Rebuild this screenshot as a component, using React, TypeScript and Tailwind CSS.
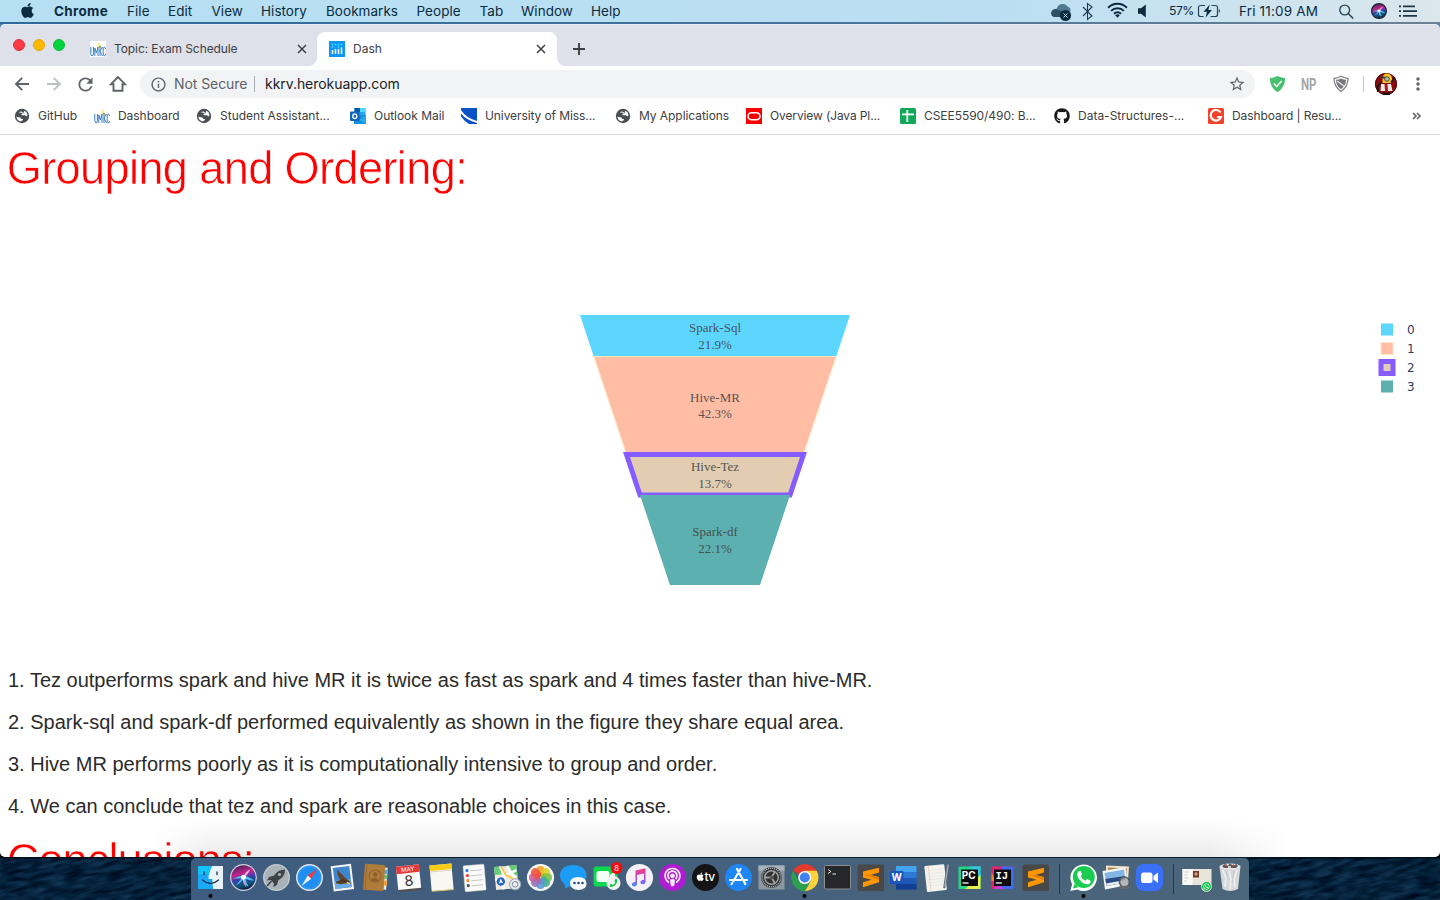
import React from 'react';
import { FaApple, FaGithub, FaPhoneAlt, FaPodcast, FaWhatsapp } from 'react-icons/fa';
import { MdRefresh, MdInfoOutline, MdStarBorder, MdMoreVert } from 'react-icons/md';

const menuItems = [
  { label: 'File', cls: 'w-[41px]' },
  { label: 'Edit', cls: 'w-[43.5px]' },
  { label: 'View', cls: 'w-[49.5px]' },
  { label: 'History', cls: 'w-[65px]' },
  { label: 'Bookmarks', cls: 'w-[90.5px]' },
  { label: 'People', cls: 'w-[63px]' },
  { label: 'Tab', cls: 'w-[41.5px]' },
  { label: 'Window', cls: 'w-[70px]' },
  { label: 'Help', cls: 'w-[40px]' },
];

function SiriOrb({ cx, cy, r, id }: { cx: number; cy: number; r: number; id: string }) {
  return (
    <g>
      <defs>
        <linearGradient id={id} x1="0.3" y1="0" x2="0.6" y2="1">
          <stop offset="0" stopColor="#4b2258" />
          <stop offset="0.35" stopColor="#c2268c" />
          <stop offset="0.55" stopColor="#3b3fae" />
          <stop offset="0.8" stopColor="#0b5378" />
          <stop offset="1" stopColor="#12143c" />
        </linearGradient>
      </defs>
      <circle cx={cx} cy={cy} r={r} fill={`url(#${id})`} />
      <g transform={`translate(${cx} ${cy}) scale(${r / 12})`}>
        <path d="M-10.500 1Q-4-1.500 0-2 4-1.500 10.500 3 6 3 2 1.500 3 6 5 9 0 7-.5 2-3 6-8 8-4 4-2 1-6 1-10.500 1z" fill="#4fd0ee" fillOpacity=".9" />
        <path d="M0-1Q2-6 7-8 4-3 1 0z" fill="#f7b3dc" />
        <path d="M0 0Q1 6 3 10 0 7-1 1z" fill="#f4a4d4" />
        <circle r="2.4" cy="-.3" fill="#fff" />
      </g>
    </g>
  );
}

function MenuBar() {
  return (
    <div className="flex h-[22px] shrink-0 items-center bg-linear-to-r from-[#b6dff3] via-[#bbdff2] via-70% to-[#dae7ec] text-[13.5px] leading-[22px] whitespace-nowrap text-[#0b2c40]">
      <div className="flex w-[54px] shrink-0 pl-[19px]">
        <FaApple size={17} className="relative -top-px" />
      </div>
      <div className="w-[73px] shrink-0 font-bold tracking-[0.3px]">Chrome</div>
      {menuItems.map((m) => (
        <div key={m.label} className={`${m.cls} shrink-0 tracking-[0.04px]`}>
          {m.label}
        </div>
      ))}
      <div className="flex-1" />
      <svg className="shrink-0" width="119" height="22" viewBox="0 0 119 22">
        <path d="M5 12a4.400 4.400 0 0 1 2-3.800 6 6 0 0 1 10.600-1.800 4.600 4.600 0 0 1 3 4.600l-6 5z" fill="#50798e" />
        <path d="M1 13.500a4.500 4.500 0 0 1 5-4.500l10 4-2 4H4a4 4 0 0 1-3-3.500z" fill="#2c4f63" />
        <circle cx="15.500" cy="15.500" r="5.600" fill="#0d2b3f" />
        <path d="M13.500 13.500l4 4M17.500 13.500l-4 4" stroke="#bfe0ef" strokeWidth="1" />
        <path d="M33 7l9 9-4.500 3.500V3.500l4.500 3.500-9 9" fill="none" stroke="#173b50" strokeWidth="1.100" />
        <g fill="none" stroke="#0d2b3f" strokeWidth="2">
          <path d="M58.100 7.800a13.200 13.200 0 0 1 18.800 0" />
          <path d="M61.100 10.900a9 9 0 0 1 12.800 0" />
          <path d="M64 13.800a5 5 0 0 1 7 0" />
        </g>
        <path d="M65.200 15.300a3.300 3.300 0 0 1 4.600 0L67.500 17.700z" fill="#0d2b3f" />
        <path d="M88 8.300h3l4.800-3.800v13l-4.800-3.800h-3z" fill="#0d2b3f" />
      </svg>
      <div className="w-[28px] shrink-0 text-[12.3px] tracking-[-0.6px]">57%</div>
      <svg className="shrink-0" width="42" height="22" viewBox="0 0 42 22">
        <path d="M8 5.500H3.500a2 2 0 0 0-2 2v7a2 2 0 0 0 2 2H6.500M14.500 5.500h4a2 2 0 0 1 2 2v7a2 2 0 0 1-2 2H13.500" fill="none" stroke="#1f4357" strokeWidth="1.200" />
        <path d="M12.800 4.500l-6.300 7.300h3.600l-1.600 5.900 6.400-7.600h-3.600z" fill="#0d2b3f" />
        <path d="M21.800 9v4c1.500-.6 1.500-3.400 0-4z" fill="#1f4357" />
      </svg>
      <div className="w-[98px] shrink-0 tracking-[0.17px]">Fri 11:09 AM</div>
      <svg className="shrink-0" width="103" height="22" viewBox="0 0 103 22">
        <circle cx="7.700" cy="10" r="4.900" fill="none" stroke="#2a4555" strokeWidth="1.400" />
        <path d="M11.200 13.500l5 5" stroke="#2a4555" strokeWidth="1.600" />
        <g>
          <SiriOrb cx={42} cy={11} r={7.2} id="siriMenu" />
          <circle cx="42" cy="11" r="7.400" fill="none" stroke="#14202e" strokeWidth="1.200" />
        </g>
        <path
          d="M62 5.500h2v1.800h-2zM62 10.200h2v1.800h-2zM62 14.900h2v1.800h-2zM66 5.500h12v1.800H66zM66 10.200h14v1.800H66zM66 14.900h14v1.800H66z"
          fill="#1c3645"
        />
      </svg>
    </div>
  );
}

function UmkcIcon() {
  return (
    <svg width="16" height="16" viewBox="0 0 16 16" className="shrink-0">
      <rect width="16" height="16" fill="#fff" />
      <path d="M7 .500l5.500 7-5-1.500 1.500-1z" fill="#f5cf1d" />
      <path d="M.8 6v6.500q0 2.300 1.300 2.300t1.300-2.300V6M4.800 15V7l1.700 5L8 6v9M10 5v10M12.500 6L10 10l2.500 5M15.600 8q-.4-2-1.300-2-1.200 0-1.200 4.500t1.200 4.500q1 0 1.300-2" fill="none" stroke="#3c7cc6" strokeWidth="1" />
    </svg>
  );
}

function CloseIcon() {
  return (
    <svg width="14" height="14" viewBox="0 0 14 14">
      <path d="M3 3l8 8M11 3l-8 8" stroke="#3c4043" strokeWidth="1.500" />
    </svg>
  );
}

function TabStrip() {
  return (
    <div className="flex h-[42px] shrink-0 items-end rounded-t-[5px] border-t border-[#eceef3] bg-[#dee1e9] text-[12px] text-[#3c4043]">
      <div className="flex h-full w-[90px] shrink-0 items-center gap-[8px] pb-[1px] pl-[13px]">
        <div className="size-[12px] rounded-full border border-[#e0303c] bg-[#fc3b47]" />
        <div className="size-[12px] rounded-full border border-[#e5a50a] bg-[#fdb900]" />
        <div className="size-[12px] rounded-full border border-[#0fb93a] bg-[#00d43c]" />
      </div>
      <div className="flex h-[34px] w-[227px] shrink-0 items-center">
        <UmkcIcon />
        <div className="ml-2 flex-1 tracking-[-0.09px]">Topic: Exam Schedule</div>
        <div className="mr-[8px]">
          <CloseIcon />
        </div>
      </div>
      <div className="relative flex h-[34px] w-[240px] shrink-0 items-center rounded-t-[8px] bg-white pl-[12px]">
        <div className="absolute bottom-0 -left-2 size-2 bg-[radial-gradient(circle_at_0_0,#dee1e9_7.5px,#fff_8px)]" />
        <div className="absolute -right-2 bottom-0 size-2 bg-[radial-gradient(circle_at_100%_0,#dee1e9_7.5px,#fff_8px)]" />
        <svg width="16" height="16" viewBox="0 0 16 16">
          <rect width="16" height="16" fill="#0d96fb" />
          <path d="M3.500 9v4M6.500 8v5M9.500 8v5M12.500 6.500V13" stroke="#fff" strokeWidth="1.500" />
          <path d="M2.800 6h1.400M2.800 3.500h1.400M5.800 3.500h1.400M8.800 3.500h1.400M8.800 6h1.400M11.800 3.500h1.400" stroke="#4fe3f6" strokeWidth="1.300" />
        </svg>
        <div className="ml-2 flex-1">Dash</div>
        <div className="mr-[9px]">
          <CloseIcon />
        </div>
      </div>
      <div className="flex h-[34px] items-center pl-[13px]">
        <svg width="18" height="18" viewBox="0 0 18 18">
          <path d="M9 3v12M3 9h12" stroke="#3c4043" strokeWidth="1.900" />
        </svg>
      </div>
    </div>
  );
}

function Toolbar() {
  return (
    <div className="flex h-[36px] shrink-0 items-center bg-white text-[#5f6368]">
      <div className="flex w-[140px] shrink-0 items-center gap-[12px] pl-[12px]">
        <svg width="20" height="20" viewBox="0 0 20 20">
          <path d="M17 10H4.500M10.200 3.800L4 10l6.200 6.200" fill="none" stroke="#5f6368" strokeWidth="1.900" />
        </svg>
        <svg width="20" height="20" viewBox="0 0 20 20">
          <path d="M3 10h12.500M9.800 3.800L16 10l-6.200 6.200" fill="none" stroke="#bdc1c6" strokeWidth="1.900" />
        </svg>
        <MdRefresh size={21} className="-mr-px -ml-px" />
        <svg width="20" height="20" viewBox="0 0 20 20" className="ml-px">
          <path d="M10 3L3 10.200h2.500v6.600h9v-6.600H17z" fill="none" stroke="#5f6368" strokeWidth="1.900" />
        </svg>
      </div>
      <div className="flex h-[28px] w-[1115px] shrink-0 items-center rounded-full bg-[#f1f3f4] pl-[10px] text-[14px]">
        <MdInfoOutline size={17} />
        <div className="relative -top-px ml-[7px] w-[74px] tracking-[-0.07px] whitespace-nowrap">Not Secure</div>
        <div className="ml-[6px] h-[16px] w-px bg-[#a9acb0]" />
        <div className="relative -top-px ml-[10px] flex-1 tracking-[-0.05px] text-[#202124]">kkrv.herokuapp.com</div>
        <MdStarBorder size={18} className="mr-[9px]" />
      </div>
      <svg width="185" height="36" viewBox="0 0 185 36" className="shrink-0">
        <path d="M22.500 10q4 2 7.700 2 0 9.500-7.700 14.200Q14.800 21.500 14.800 12q4 0 7.700-2z" fill="#45c16f" />
        <path d="M18.700 17.500l3 3 5-5.500" fill="none" stroke="#fff" strokeWidth="1.500" />
        <text x="46" y="24" textLength="15.500" lengthAdjust="spacingAndGlyphs" className="font-['Roboto',sans-serif] text-[16px] font-bold" fill="#a5a5a5">
          NP
        </text>
        <path d="M86 10.300q3.500 2 7 2 0 8.500-7 13.200-7-4.700-7-13.200 3.500 0 7-2z" fill="none" stroke="#77797c" strokeWidth="1.200" />
        <path d="M86 12.500q2.500 1.300 5 1.300 0 6-5 9.500-5-3.500-5-9.500 2.500 0 5-1.300z" fill="#77797c" />
        <path d="M82 15l7.500 5.500" stroke="#e8e8e8" strokeWidth="1.300" />
        <path d="M108.500 10v16" stroke="#c3c5c8" />
        <circle cx="131" cy="18" r="11" fill="#8c0b10" />
        <circle cx="131" cy="18" r="10.500" fill="none" stroke="#4c0a0c" />
        <path d="M127.500 17v-5q.5-4.500 4.500-4.500t5 4.500v5z" fill="#f5c526" />
        <path d="M125.500 11l8 1.500" stroke="#3a3a36" strokeWidth="1.800" />
        <circle cx="132" cy="13" r="2.300" fill="#b9b6ac" stroke="#55524a" />
        <path d="M126 18h10l1.500 7h-12z" fill="#f4eee8" />
        <path d="M129.500 18h3l.5 7h-3z" fill="#b3161d" />
        <path d="M126 16.500l-3.500 4.500.5 5M136 16.500l4-5M129 26v2h5v-2" fill="none" stroke="#1b1412" strokeWidth="2" />
      </svg>
    </div>
  );
}

function GlobeIcon() {
  return (
    <svg width="16" height="16" viewBox="0 0 16 16" className="shrink-0">
      <circle cx="8" cy="8" r="7.200" fill="#4a4e55" />
      <path d="M2.400 8.300Q3.300 9.500 5 9.300q1.800 0 2 1.400.8.500 2 .2l-.3 1.400-2 1.300Q2.600 12.500 2.400 8.300zM10.500 2.700q2.800 1.300 3.100 4.600l-1.300 1.200-1.600-1.500q-1.800.6-3.200 0L7.600 5.800l1.800-.3.300-1.200z" fill="#fff" />
      <path d="M5.500 4.300L8 4l.5 1.500" fill="none" stroke="#fff" />
    </svg>
  );
}

function OutlookIcon() {
  return (
    <svg width="16" height="16" viewBox="0 0 16 16" className="shrink-0">
      <rect x="4.500" width="11" height="8" fill="#28a8ea" />
      <rect x="10" y="0" width="5.500" height="4" fill="#50d9ff" />
      <rect x="4.500" y="0" width="5.500" height="4" fill="#0358a7" />
      <path d="M3 7h13v9H4z" fill="#1490df" />
      <path d="M16 7v9L9 12z" fill="#28a8ea" />
      <rect y="3.500" width="9.500" height="9.500" rx="1" fill="#0f65bb" />
      <ellipse cx="4.800" cy="8.200" rx="2" ry="2.300" fill="none" stroke="#fff" strokeWidth="1.400" />
    </svg>
  );
}

function StripeIcon() {
  return (
    <svg width="16" height="16" viewBox="0 0 16 16" className="shrink-0">
      <rect width="16" height="16" fill="#0a53c6" />
      <path d="M0 2q5 8 16 11v2Q5 12 0 5.500z" fill="#fff" />
      <path d="M0 8.500q4 5.500 8 7.500H0z" fill="#fff" />
    </svg>
  );
}

function OracleIcon() {
  return (
    <svg width="16" height="16" viewBox="0 0 16 16" className="shrink-0">
      <rect width="16" height="16" fill="#f80000" />
      <rect x="2" y="4.800" width="12" height="7" rx="3.500" fill="none" stroke="#fff" strokeWidth="1.600" />
    </svg>
  );
}

function SheetIcon() {
  return (
    <svg width="16" height="16" viewBox="0 0 16 16" className="shrink-0">
      <rect width="16" height="16" rx="1.500" fill="#0fa958" />
      <path d="M7.300 2v12M2 6.300h12" stroke="#fff" strokeWidth="1.800" />
    </svg>
  );
}

function GrammarIcon() {
  return (
    <svg width="16" height="16" viewBox="0 0 16 16" className="shrink-0">
      <rect width="16" height="16" rx="1.500" fill="#f0432a" />
      <path d="M12.500 4.500A5.300 5.300 0 1 0 13 9H9" fill="none" stroke="#fff" strokeWidth="2.200" />
    </svg>
  );
}

const bookmarks = [
  { label: 'GitHub', icon: <GlobeIcon />, cls: 'w-[80px]' },
  { label: 'Dashboard', icon: <UmkcIcon />, cls: 'w-[102px] tracking-[-0.05px]' },
  { label: 'Student Assistant...', icon: <GlobeIcon />, cls: 'w-[154px]' },
  { label: 'Outlook Mail', icon: <OutlookIcon />, cls: 'w-[111px] tracking-[-0.04px]' },
  { label: 'University of Miss...', icon: <StripeIcon />, cls: 'w-[154px] tracking-[-0.09px]' },
  { label: 'My Applications', icon: <GlobeIcon />, cls: 'w-[131px] tracking-[-0.06px]' },
  { label: 'Overview (Java Pl...', icon: <OracleIcon />, cls: 'w-[154px] tracking-[-0.12px]' },
  { label: 'CSEE5590/490: B...', icon: <SheetIcon />, cls: 'w-[154px] tracking-[-0.05px]' },
  { label: 'Data-Structures-...', icon: <FaGithub size={16} className="shrink-0 text-[#191717]" />, cls: 'w-[154px]' },
  { label: 'Dashboard | Resu...', icon: <GrammarIcon />, cls: 'w-[154px] tracking-[-0.08px]' },
];

function BookmarksBar() {
  return (
    <div className="flex h-[33px] shrink-0 items-center border-b border-[#d5d7da] bg-white pb-[4px] pl-[14px] text-[12px] text-[#3c4043]">
      {bookmarks.map((b, i) => (
        <div key={i} className={`${b.cls} flex shrink-0 items-center gap-2 whitespace-nowrap`}>
          {b.icon}
          <span>{b.label}</span>
        </div>
      ))}
      <svg width="12" height="12" viewBox="0 0 12 12" className="ml-[49px]">
        <path d="M2 3l3 3-3 3M6 3l3 3-3 3" fill="none" stroke="#5f6368" strokeWidth="1.600" />
      </svg>
    </div>
  );
}

const segments = [
  { name: 'Spark-Sql', pct: '21.9%', y: 332 },
  { name: 'Hive-MR', pct: '42.3%', y: 401.5 },
  { name: 'Hive-Tez', pct: '13.7%', y: 471 },
  { name: 'Spark-df', pct: '22.1%', y: 536 },
];

function FunnelChart() {
  return (
    <svg width="1440" height="450" viewBox="0 200 1440 450" className="block">
      <path d="M580 315H850L836.300 356.200H593.700z" fill="#5cd6ff" />
      <path d="M593.800 356.500H836.200L803.500 454.500H626.500z" fill="#ffbda6" stroke="#ffe7c4" />
      <path d="M626.500 454.500H803.500L790 495H640z" fill="#e2cdb2" stroke="#855cff" strokeWidth="5" />
      <path d="M640 495H790L760 585H670z" fill="#5cb0af" />
      <g className="font-['Liberation_Serif',serif] text-[13px]" fill="#444" fillOpacity="0.9" textAnchor="middle">
        {segments.map((s) => (
          <g key={s.name}>
            <text x="715" y={s.y}>
              {s.name}
            </text>
            <text x="715" y={s.y + 16.7}>
              {s.pct}
            </text>
          </g>
        ))}
      </g>
      <rect x="1381" y="323.500" width="12" height="12" fill="#5cd6ff" />
      <rect x="1381" y="342.500" width="12" height="12" fill="#ffbda6" stroke="#ffe7c4" />
      <rect x="1381" y="361.500" width="12" height="12" fill="#e2cdb2" stroke="#855cff" strokeWidth="5" />
      <rect x="1381" y="380.500" width="12" height="12" fill="#5cb0af" />
      <g className="font-['DejaVu_Sans',sans-serif] text-[12px]" fill="#2a3f5f">
        <text x="1407" y="334">0</text>
        <text x="1407" y="353">1</text>
        <text x="1407" y="372">2</text>
        <text x="1407" y="391">3</text>
      </g>
    </svg>
  );
}

function Page() {
  return (
    <div className="h-[722px] shrink-0 bg-black">
      <div className="relative h-full overflow-hidden rounded-b-[5px] bg-white font-['Liberation_Sans',sans-serif]">
        <h1 className="h-[65px] origin-left scale-x-[0.96] pl-[7px] text-[47px] leading-[66px] tracking-[-0.65px] whitespace-nowrap text-[#ff0000] [-webkit-text-stroke:0.6px_white]">
          Grouping and Ordering:
        </h1>
        <FunnelChart />
        <div className="flex h-[177px] flex-col pt-[9px] pl-[8px] text-[20px] leading-[42px] whitespace-nowrap text-[#2b2b2b]">
          <p>1. Tez outperforms spark and hive MR it is twice as fast as spark and 4 times faster than hive-MR.</p>
          <p>2. Spark-sql and spark-df performed equivalently as shown in the figure they share equal area.</p>
          <p>3. Hive MR performs poorly as it is computationally intensive to group and order.</p>
          <p>4. We can conclude that tez and spark are reasonable choices in this case.</p>
        </div>
        <h1 className="origin-left scale-x-[0.96] pl-[7px] text-[47px] leading-[66px] tracking-[-0.95px] whitespace-nowrap text-[#ff0000] [-webkit-text-stroke:0.6px_white]">
          Conclusions:
        </h1>
        <div className="absolute bottom-0 left-[150px] h-[38px] w-[1140px] bg-linear-to-b from-black/0 to-black/8 [mask-image:linear-gradient(to_right,transparent,black_60px,black_1060px,transparent)]" />
      </div>
    </div>
  );
}

function SublimeIcon() {
  return (
    <g>
      <rect x="3.500" y="6.500" width="26.500" height="26.500" rx="1.500" fill="#484848" />
      <path d="M9 13.500L25 9.800v4.700l-8.500 2.500 8.500 2v5.200l-16 5v-5l8.500-2.500L9 19.500z" fill="#ff9800" />
      <path d="M9 16l16 6v-3l-8.500-2z" fill="#e07f00" />
    </g>
  );
}

function WhatsAppBubble() {
  return (
    <g>
      <path d="M3.300 33l1.800-6.700A13.300 13.300 0 1 1 10.300 31.400z" fill="#fff" />
      <path d="M6 30.500l1.500-5 4 3.700z" fill="#19cc4f" />
      <circle cx="16.800" cy="19" r="11" fill="#19cc4f" />
      <path d="M11.300 13.500q1-1 2.200-.4l1.600 3.500q-.1 1-1.300 1.900 1.600 3 4.600 4.300l1.700-1.700 3.600 1.700q.3 2.200-1.700 3.200-2.300 1-6-1.100-3.300-2.200-5-5.400-1.500-3.600.3-6z" fill="#fff" />
    </g>
  );
}

const dockIcons: { id: string; art: React.ReactNode; dot?: boolean }[] = [
  {
    id: 'finder',
    dot: true,
    art: (
      <g>
        <path d="M4 8h25v23H4z" fill="#e9f3fb" />
        <path d="M4 8h14q-3.500 6-3.500 13h3.800q0 5 1 10H4z" fill="#18a9f8" />
        <path d="M4 8h14q-2 4-2.800 8H4z" fill="#12c3fb" />
        <path d="M10 14v2.500M23 14v2.500" stroke="#16324f" strokeWidth="1.300" strokeLinecap="round" />
        <path d="M8.500 22q8 7 16 0" fill="none" stroke="#16324f" strokeWidth="1.300" strokeLinecap="round" />
      </g>
    ),
  },
  {
    id: 'siri',
    art: (
      <g>
        <circle cx="16.500" cy="19.500" r="13.400" fill="#d4d0de" />
        <SiriOrb cx={16.5} cy={19.5} r={12.2} id="siriDock" />
      </g>
    ),
  },
  {
    id: 'launchpad',
    art: (
      <g>
        <circle cx="16.500" cy="19.500" r="13.500" fill="#a9b2b8" />
        <circle cx="16.500" cy="19.500" r="12.800" fill="none" stroke="#c9d0d3" />
        <path d="M25 11.500q-7 0-11 6l-5 1.500-2 3.500 4-.5 3 3.500-.8 3.500 3.800-2 1.200-4.500q7-4 6.800-11z" fill="#3d4347" />
        <path d="M11.500 23l-4.500 5" stroke="#3d4347" strokeWidth="1.500" />
        <circle cx="19.500" cy="16.500" r="1.600" fill="#a9b2b8" />
      </g>
    ),
  },
  {
    id: 'safari',
    art: (
      <g>
        <circle cx="16.500" cy="19.500" r="13.500" fill="#dfe6ea" />
        <circle cx="16.500" cy="19.500" r="12" fill="#1e8ff0" />
        <circle cx="16.500" cy="19.500" r="10.800" fill="none" stroke="#6bb8f7" strokeWidth="1" strokeDasharray=".6 1.600" />
        <path d="M24.500 10.500l-6.300 10.200-3.400-3.200z" fill="#f23a3a" />
        <path d="M8.500 28l6.300-10.500 3.400 3.200z" fill="#f4f6f8" />
      </g>
    ),
  },
  {
    id: 'mail',
    art: (
      <g transform="rotate(-7 16 19)">
        <rect x="6" y="7" width="20.500" height="25.500" fill="#f4f4f2" />
        <rect x="8" y="9" width="16.500" height="21" fill="#3f86cf" />
        <path d="M8 22h16.500v8H8z" fill="#6eabde" />
        <path d="M12 11l4 5 3 4 4 4 1 3-5-1-6 0-3-2 4-2-2-5z" fill="#5f452b" />
        <path d="M9.500 24l7-1.500 6 3" stroke="#4a3623" strokeWidth="2" fill="none" />
        <path d="M20 25l3 1.500" stroke="#f5dc9a" strokeWidth="1.500" />
      </g>
    ),
  },
  {
    id: 'contacts',
    art: (
      <g transform="rotate(4 16 19)">
        <rect x="24" y="9" width="4" height="22" fill="#e9e6df" />
        <path d="M25 11h3.500v4H25z" fill="#4ea6e6" />
        <path d="M25 16h3.500v4H25z" fill="#5fc66a" />
        <path d="M25 22h3.500v5H25z" fill="#f0a23a" />
        <rect x="5" y="6.500" width="20.500" height="26" rx="1.500" fill="#b07c3a" />
        <path d="M7 7v25" stroke="#96682f" />
        <circle cx="16" cy="18" r="6" fill="none" stroke="#8d602b" strokeWidth="1" />
        <circle cx="16" cy="16.500" r="2.200" fill="#8d602b" />
        <path d="M12 22q4-4.500 8 0-4 3-8 0z" fill="#8d602b" />
      </g>
    ),
  },
  {
    id: 'calendar',
    art: (
      <g transform="rotate(-6 16 19)">
        <path d="M6 29h23v4H6z" fill="#55504d" />
        <rect x="5" y="7.500" width="23" height="23.500" fill="#fafafa" />
        <rect x="5" y="7.500" width="23" height="7.500" fill="#e33a3c" />
        <text x="16.500" y="13.300" textAnchor="middle" className="text-[6px]" fill="#fff">
          MAY
        </text>
        <text x="16.500" y="28" textAnchor="middle" className="text-[14.5px]" fill="#333">
          8
        </text>
      </g>
    ),
  },
  {
    id: 'notes',
    art: (
      <g transform="rotate(-5 16 19)">
        <rect x="5.500" y="6.500" width="22" height="26" fill="#f8f7f2" />
        <path d="M5.500 6.500h22V12h-22z" fill="#fccb15" />
        <path d="M5.500 13h22" stroke="#d8d3c2" />
        <path d="M6 32.500h21.500" stroke="#d9c26a" />
      </g>
    ),
  },
  {
    id: 'reminders',
    art: (
      <g transform="rotate(-5 16 19)">
        <rect x="6" y="7" width="21" height="26" rx="1" fill="#fbfbfb" stroke="#cfcfcf" strokeWidth=".5" />
        <circle cx="9.500" cy="12" r="1.600" fill="#2f80ed" />
        <circle cx="9.500" cy="17" r="1.600" fill="#f2453d" />
        <circle cx="9.500" cy="22" r="1.600" fill="#f28a24" />
        <circle cx="9.500" cy="27" r="1.600" fill="#4a5560" />
        <path d="M13 12.500h11.500M13 17.500h11.500M13 22.500h11.500M13 27.500h11.500" stroke="#bdbdbd" strokeWidth=".8" />
      </g>
    ),
  },
  {
    id: 'maps',
    art: (
      <g transform="rotate(-5 16 19)">
        <rect x="4" y="8" width="22.500" height="23" fill="#eeeade" />
        <path d="M4 8h7v8H4zM19 8h7.500v11l-8-6z" fill="#63cd78" />
        <path d="M10 8l4 12-3 11M4 21l22-8M17 8l9 17" fill="none" stroke="#fff" strokeWidth="2.500" />
        <path d="M11 8l4 9 7 4" fill="none" stroke="#f8c643" strokeWidth="1.800" />
        <circle cx="9.500" cy="23" r="4.200" fill="#2563c9" />
        <path d="M9.500 20l2.200 5-2.200-1-2.200 1z" fill="#fff" />
        <circle cx="23.500" cy="27" r="5.500" fill="#e9edf0" stroke="#98a8b3" />
        <circle cx="23.500" cy="27" r="2.800" fill="none" stroke="#708492" strokeWidth=".9" />
      </g>
    ),
  },
  {
    id: 'photos',
    art: (
      <g>
        <circle cx="16.500" cy="19.500" r="13.600" fill="#f6f5f2" />
        {['#f7a11b', '#d8cf20', '#7cc243', '#3fae8d', '#5a95d8', '#9270c2', '#cc5a92', '#f0523c'].map((c, i) => (
          <rect key={c} x="12.500" y="8" width="8" height="11" rx="3.800" fill={c} fillOpacity=".88" transform={`rotate(${i * 45} 16.500 19.500)`} />
        ))}
      </g>
    ),
  },
  {
    id: 'messages',
    art: (
      <g>
        <path d="M3 17.500C3 11 8.500 7 16 7s13.500 4 13.500 10.500S24 29 16 28q-4 0-8 2.500Q9 28 7 26q-4-4-4-8.500z" fill="#1c9cf5" />
        <path d="M13 25.500q0-6.500 8-6.500t8.500 6-7 6.800h-1q4 0 6 1.200-1 0-3-1.200-11 1.200-11.500-6.300z" fill="#f6f8fa" />
        <circle cx="17.500" cy="25" r="1.300" fill="#254d8c" />
        <circle cx="21.500" cy="25" r="1.300" fill="#254d8c" />
        <circle cx="25.500" cy="25" r="1.300" fill="#254d8c" />
      </g>
    ),
  },
  {
    id: 'facetime',
    art: (
      <g>
        <rect x="3.500" y="8.500" width="24" height="20" rx="3" fill="#0bda51" />
        <rect x="6.500" y="13" width="13" height="11" rx="2.500" fill="#f3fff4" />
        <path d="M20 17l5-4v10l-5-3z" fill="#f3fff4" />
        <circle cx="23.500" cy="25" r="7" fill="#f2f2f0" />
        <g transform="translate(47 0) scale(-1 1)">
          <FaPhoneAlt x={19.5} y={21} size={8} color="#12c64c" />
        </g>
        <circle cx="26.500" cy="10" r="5.900" fill="#f20d14" />
        <text x="26.500" y="12.600" textAnchor="middle" className="text-[7.5px]" fill="#fff">
          8
        </text>
      </g>
    ),
  },
  {
    id: 'music',
    art: (
      <g>
        <defs>
          <linearGradient id="note" x1="0" y1="0" x2="0" y2="1">
            <stop offset="0" stopColor="#f4407c" />
            <stop offset=".6" stopColor="#a44be0" />
            <stop offset="1" stopColor="#3a95f5" />
          </linearGradient>
        </defs>
        <circle cx="16.500" cy="19.500" r="13.600" fill="#f3f1f6" />
        <path d="M12.500 12.500l10-2.200v13.200q0 2.500-2.700 2.700-2.500 0-2.400-2 .2-2 3.600-2.500v-6.200l-7 1.500v8.500q0 2.700-2.700 2.900-2.500 0-2.400-2 .2-2 3.600-2.600z" fill="url(#note)" />
      </g>
    ),
  },
  {
    id: 'podcasts',
    art: (
      <g>
        <circle cx="16.500" cy="19.500" r="13.600" fill="#b01cd4" />
        <FaPodcast x={7} y={9.5} size={19} color="#f9eafd" />
      </g>
    ),
  },
  {
    id: 'tv',
    art: (
      <g>
        <circle cx="16.500" cy="19.500" r="13.500" fill="#141416" />
        <FaApple x={6.5} y={14} size={9.5} color="#fff" />
        <text x="15.500" y="23" className="text-[12px] font-medium tracking-[-0.5px]" fill="#fff">
          tv
        </text>
      </g>
    ),
  },
  {
    id: 'appstore',
    art: (
      <g>
        <circle cx="16.500" cy="19.500" r="13.500" fill="#1e86f5" />
        <g fill="none" stroke="#fff" strokeWidth="2.200" strokeLinecap="round">
          <path d="M18.500 11l-7 12M15 11l7.500 13.500M8 22h11M22 22h3M10.200 25l-.6 1M22.500 24.500l.8 1.500" />
        </g>
      </g>
    ),
  },
  {
    id: 'settings',
    art: (
      <g>
        <rect x="3.500" y="7.500" width="26" height="24" fill="#8c979f" />
        <rect x="3.500" y="7.500" width="26" height="5" fill="#a6b3bd" />
        <circle cx="16.500" cy="19.500" r="10.500" fill="#2f3133" />
        <circle cx="16.500" cy="19.500" r="9.300" fill="none" stroke="#b3b6b8" strokeWidth="1.300" strokeDasharray="1.200 .8" />
        <circle cx="16.500" cy="19.500" r="6.800" fill="none" stroke="#9fa2a4" strokeWidth="1.500" />
        <path d="M16.500 19.500h-7M16.500 19.500l3.500 6M16.500 19.500l3.500-6" stroke="#9fa2a4" strokeWidth="1.800" />
        <circle cx="16.500" cy="19.500" r="2" fill="#55585a" />
      </g>
    ),
  },
  {
    id: 'chrome',
    dot: true,
    art: (
      <g>
        <path d="M16.800 19.500L5 12.700A13.700 13.700 0 0 1 28.700 12.700z" fill="#e33b2e" />
        <path d="M16.800 12.700h11.900A13.700 13.700 0 0 1 16.800 33.200l5.900-10.300z" fill="#fdd23c" />
        <path d="M5 12.700l5.900 10.200 5.900 3.400 5-2-5 8.900A13.700 13.700 0 0 1 5 12.700z" fill="#2da04e" />
        <circle cx="16.800" cy="19.500" r="6.600" fill="#f4f6f8" />
        <circle cx="16.800" cy="19.500" r="5" fill="#3f82ee" />
      </g>
    ),
  },
  {
    id: 'terminal',
    art: (
      <g>
        <rect x="3.500" y="7.500" width="26" height="23.500" rx="1" fill="#25272a" stroke="#8e8e8e" />
        <path d="M7 11.500l3 2-3 2M11.500 16H15" fill="none" stroke="#f0f0f0" strokeWidth="1" />
      </g>
    ),
  },
  { id: 'sublime', art: <SublimeIcon /> },
  {
    id: 'word',
    art: (
      <g>
        <rect x="9" y="8" width="20.500" height="23.500" rx="1.200" fill="#2157b5" />
        <path d="M9 8h20.500v6H9z" fill="#43a4ee" />
        <path d="M9 14h20.500v6H9z" fill="#2b7ad6" />
        <path d="M9 26h20.500v5.500H9z" fill="#123f91" />
        <rect x="3" y="13" width="13.500" height="13" rx="1" fill="#1a56bd" />
        <text x="9.700" y="23" textAnchor="middle" className="text-[10px] font-bold" fill="#fff">
          W
        </text>
      </g>
    ),
  },
  {
    id: 'textedit',
    art: (
      <g transform="rotate(-6 16 19)">
        <rect x="5.500" y="7" width="20" height="26" rx="1" fill="#f5f4ef" />
        <path d="M7 12h17M7 15h17M7 18h17M7 21h17M7 24h17M7 27h17" stroke="#d9dce0" strokeWidth=".5" />
        <path d="M9.500 7v26" stroke="#efb9b4" strokeWidth=".6" />
        <path d="M29 8L23 31" stroke="#6b7680" strokeWidth="2.200" />
        <path d="M29.500 8L24 29" stroke="#b7c2c9" strokeWidth=".8" />
      </g>
    ),
  },
  {
    id: 'pycharm',
    art: (
      <g>
        <rect x="5.500" y="8.500" width="22" height="22.500" fill="#21d789" />
        <path d="M16 8.500h11.500V19z" fill="#35c6e8" />
        <path d="M27.500 17v14H12z" fill="#e8ef4b" />
        <rect x="8" y="11.500" width="17" height="16.500" fill="#0b0b0b" />
        <text x="8.800" y="21" className="text-[10px] font-bold" fill="#fff">
          PC
        </text>
        <path d="M9.500 25h6" stroke="#fff" strokeWidth="1.300" />
      </g>
    ),
  },
  {
    id: 'intellij',
    art: (
      <g>
        <rect x="5.500" y="8.500" width="22" height="22.500" fill="#e5246f" />
        <path d="M16 8.500h11.500V31H14z" fill="#3d6cf0" />
        <path d="M5.500 14v9l4 0z" fill="#f7802b" />
        <path d="M7 31h12l-6-4z" fill="#c33ae0" />
        <rect x="8" y="11.500" width="17" height="16.500" fill="#0b0b10" />
        <text x="9.500" y="21" className="font-['Liberation_Mono',monospace] text-[10.5px] font-bold" fill="#fff">
          IJ
        </text>
        <path d="M9.800 25h6" stroke="#fff" strokeWidth="1.300" />
      </g>
    ),
  },
  { id: 'sublime2', art: <SublimeIcon /> },
  { id: 'sep1', art: null },
  { id: 'whatsapp', dot: true, art: <WhatsAppBubble /> },
  {
    id: 'preview',
    art: (
      <g>
        <path d="M6 7.500l23 1-1 14-22-1z" fill="#efe3c7" />
        <path d="M8 9.500l19 1-1 8-18-1z" fill="#a98353" />
        <path d="M2.500 13l23-4 2.500 18-23 4.500z" fill="#f6f6f4" />
        <path d="M4.500 15l19.500-3.500 1.800 13L6.500 28z" fill="#82b6e6" />
        <path d="M5.300 21l19.500-3 .9 6.500L6.500 28z" fill="#294a86" />
        <path d="M6 25.500l19.500-3.500.4 2.500L6.500 28z" fill="#e9ecef" />
        <circle cx="24.500" cy="24" r="5" fill="#a6acb0" fillOpacity=".8" stroke="#54585b" strokeWidth="1.500" />
        <path d="M19.500 28h9.500v3h-9.500z" fill="#65696c" />
      </g>
    ),
  },
  {
    id: 'zoom',
    art: (
      <g>
        <rect x="3" y="6" width="27" height="27" rx="7.500" fill="#3a6ffa" />
        <rect x="8" y="14.500" width="11.500" height="10.500" rx="2.500" fill="#fff" />
        <path d="M20.500 18l4.500-3.500v10.500l-4.500-3.500z" fill="#fff" />
      </g>
    ),
  },
  { id: 'sep2', art: null },
  {
    id: 'window',
    art: (
      <g>
        <rect x="1.500" y="11" width="29" height="16" fill="#e9e4da" />
        <rect x="1.500" y="11" width="10" height="16" fill="#f9f9f8" />
        <path d="M3.500 14h4M3.500 17h3M3.500 20h4M3.500 23h2" stroke="#d0c8bf" />
        <rect x="12" y="13" width="6" height="6.500" fill="#6d3a2c" />
        <circle cx="15" cy="16" r="1.800" fill="#d89c78" />
        <circle cx="25.500" cy="28.500" r="5.300" fill="#fff" />
        <circle cx="25.500" cy="28.500" r="4.700" fill="#22c455" />
        <FaWhatsapp x={22} y={25} size={7} color="#fff" />
      </g>
    ),
  },
  {
    id: 'trash',
    art: (
      <g>
        <path d="M5.500 8.500h21L24 31q-8 4-15.500 0z" fill="#d6d8d9" />
        <path d="M9 12l3 8-1 9M15 13l2 8-1 10M23 12l-3 9 1 8" fill="none" stroke="#eceeef" strokeWidth="1.800" />
        <path d="M12 13l2 9M20 13l-2 12" stroke="#c3c7ca" />
        <ellipse cx="16" cy="8.500" rx="10.500" ry="3" fill="#e9ebec" />
        <path d="M8 8l3-2 3 2 2-3 3 3 3-2 2 2-2 2H10z" fill="#555b60" />
        <path d="M11 8l2-1M18 8l2-1" stroke="#c4443b" strokeWidth="1.500" />
        <path d="M14 9h3" stroke="#f4f4f4" strokeWidth="1.500" />
      </g>
    ),
  },
];

function Ocean({ seed, w }: { seed: number; w: number }) {
  const id = `sea${seed}`;
  return (
    <svg width={w} height="43" viewBox={`0 0 ${w} 43`} className="shrink-0">
      <filter id={id} x="0" y="0" width="100%" height="100%" colorInterpolationFilters="sRGB">
        <feTurbulence type="fractalNoise" baseFrequency="0.05 0.24" numOctaves="3" seed={seed} />
        <feColorMatrix values="0.16 0 0 0 -0.06  0.28 0 0 0 -0.01  0.34 0 0 0 0.06  0 0 0 0 1" />
      </filter>
      <rect width={w} height="43" fill="#04203c" />
      <g transform="rotate(-12)">
        <rect x="-20" y="-10" width={w + 40} height="110" filter={`url(#${id})`} />
      </g>
      <rect width={w} height="1.500" fill="#040e18" />
    </svg>
  );
}

function Dock() {
  return (
    <div className="flex h-[43px] shrink-0 bg-[#071c2c]">
      <Ocean seed={4} w={191} />
      <div className="mt-px flex h-[42px] w-[1058px] shrink-0 rounded-t-[5px] bg-linear-to-r from-[#3e5c80] to-[#4b657a] pl-[2.5px]">
        {dockIcons.map((d) =>
          d.art ? (
            <svg key={d.id} width="33" height="42" viewBox="0 0 33 42" className="shrink-0 overflow-visible">
              {d.art}
              {d.dot && <circle cx="16.500" cy="38" r="2" fill="#000" />}
            </svg>
          ) : (
            <div key={d.id} className="flex w-[15px] shrink-0 justify-center pt-[6px]">
              <div className="h-[30px] w-px bg-[#1f3a50]" />
            </div>
          ),
        )}
      </div>
      <Ocean seed={9} w={191} />
    </div>
  );
}

export default function App() {
  return (
    <div className="flex h-[900px] w-[1440px] flex-col overflow-hidden bg-[#4b82aa] font-['Inter','Liberation_Sans',sans-serif]">
      <MenuBar />
      <div className="h-[2px] shrink-0 bg-linear-to-r from-[#2f6a9d] via-[#41719c] to-[#6d7f95]" />
      <TabStrip />
      <div className="relative">
        <Toolbar />
        <MdMoreVert size={20} className="absolute top-[8px] right-[12px] text-[#5f6368]" />
      </div>
      <BookmarksBar />
      <Page />
      <Dock />
    </div>
  );
}
